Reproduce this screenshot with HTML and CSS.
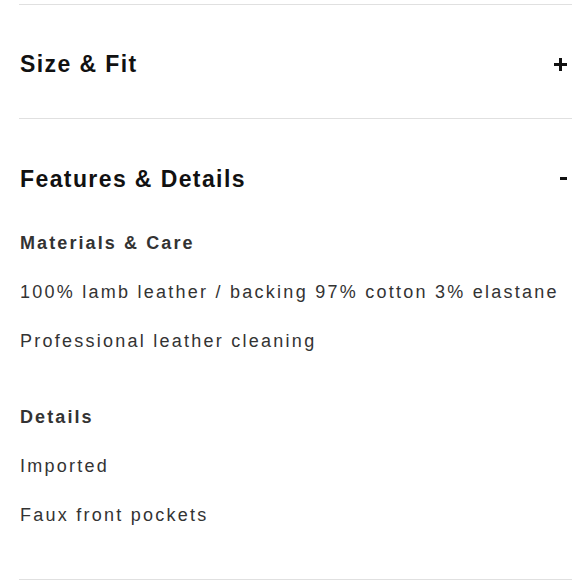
FILE: index.html
```html
<!DOCTYPE html>
<html lang="en">
<head>
<meta charset="utf-8">
<title>Product details</title>
<link rel="stylesheet" href="styles.css">
</head>
<body>
<div class="accordion">
  <section class="item">
    <div class="item-head">
      <h2 class="item-title">Size &amp; Fit</h2>
      <span class="icon icon-plus" aria-hidden="true"></span>
    </div>
  </section>
  <section class="item item-open">
    <div class="item-head">
      <h2 class="item-title">Features &amp; Details</h2>
      <span class="icon icon-minus" aria-hidden="true"></span>
    </div>
    <div class="item-body">
      <h3 class="sub">Materials &amp; Care</h3>
      <p class="line">100% lamb leather / backing 97% cotton 3% elastane</p>
      <p class="line">Professional leather cleaning</p>
      <h3 class="sub sub-gap">Details</h3>
      <p class="line">Imported</p>
      <p class="line">Faux front pockets</p>
    </div>
  </section>
  <div class="end"></div>
</div>
</body>
</html>
```

FILE: styles.css
```css
html, body {
  margin: 0;
  padding: 0;
  background: #ffffff;
}

body {
  font-family: "Liberation Sans", Arial, Helvetica, sans-serif;
}

.accordion {
  padding: 4px 8px 0 19px;
}

.item {
  border-top: 1px solid #e0e0e0;
}

.item-head {
  display: flex;
  align-items: center;
  justify-content: space-between;
  padding: 47px 0 42px 1px;
}

.item-open .item-head {
  padding: 48px 0 0 1px;
}

.item-title {
  margin: 0;
  font-size: 23px;
  line-height: 24px;
  font-weight: 700;
  letter-spacing: 1.4px;
  color: #111111;
}

.icon {
  position: relative;
  display: block;
  width: 13px;
  height: 13px;
  margin-right: 5px;
}

.icon-plus::before,
.icon-plus::after,
.icon-minus::before {
  content: "";
  position: absolute;
  background: #111111;
}

.icon-plus::before {
  left: 0;
  top: 5px;
  width: 13px;
  height: 3px;
}

.icon-plus::after {
  left: 5px;
  top: 0;
  width: 3px;
  height: 13px;
}

.icon-minus::before {
  right: 0;
  top: 4px;
  width: 7px;
  height: 3px;
}

.item-body {
  padding: 40px 0 52px 1px;
}

.sub {
  margin: 0;
  font-size: 18px;
  line-height: 24px;
  font-weight: 700;
  letter-spacing: 2.1px;
  color: #333333;
}

.sub-gap {
  margin-top: 52px;
}

.line {
  margin: 25px 0 0;
  font-size: 18px;
  line-height: 24px;
  letter-spacing: 2.25px;
  color: #333333;
}

.end {
  border-top: 1px solid #e0e0e0;
}
```
